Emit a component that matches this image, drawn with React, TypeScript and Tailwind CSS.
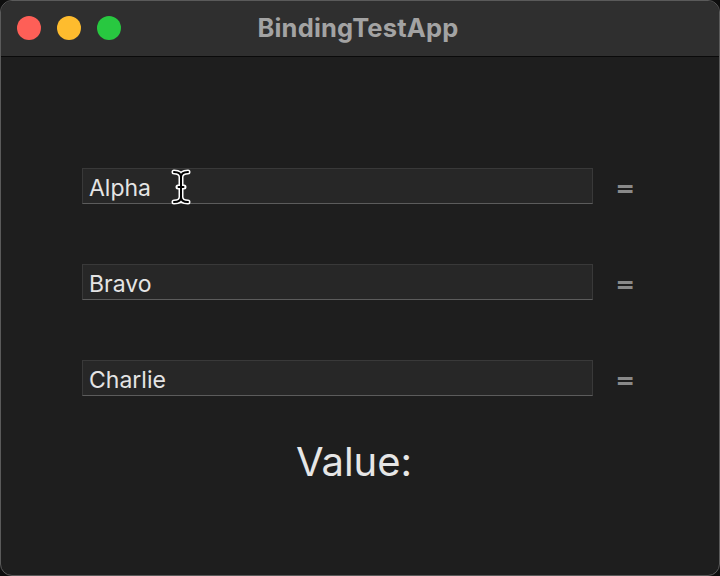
const fields = ['Alpha', 'Bravo', 'Charlie'];

const App = () => {
  return (
    <div className="w-[720px] h-[576px] bg-[#0e0e0e] font-['Inter',sans-serif]">
      <div className="relative flex flex-col w-full h-full rounded-[12px] overflow-hidden border border-[#5a5a5a] bg-[#1e1e1e]">
        {/* Title bar */}
        <div className="relative flex items-center justify-center h-[56px] shrink-0 bg-[#2f2f2f] border-b border-[#0a0a0a]">
          <div className="absolute left-[16px] top-[15px] flex gap-[16px]">
            <span className="w-[24px] h-[24px] rounded-full bg-[#fe5f57]" />
            <span className="w-[24px] h-[24px] rounded-full bg-[#febc2e]" />
            <span className="w-[24px] h-[24px] rounded-full bg-[#28c840]" />
          </div>
          <h1 className="text-[25.5px] font-bold text-[#a3a3a3] tracking-[0.2px] -ml-[4px]">BindingTestApp</h1>
        </div>

        {/* Content */}
        <main className="flex flex-col pt-[111px]">
          <div className="flex flex-col gap-[60px]">
            {fields.map((f) => (
              <div key={f} className="flex items-center h-[36px] pl-[81px]">
                <div className="relative w-[511px] h-[36px] flex items-center pl-[6px] pt-[3px] bg-[#272727] border border-[#393939] border-b-[#5c5c5c]">
                  <span className="text-[23px] leading-[28px] text-[#e4e4e4]">{f}</span>
                  {f === 'Alpha' && (
                    <svg className="absolute left-[88px] top-[0px]" width="20" height="36" viewBox="0 0 20 36">
                      <path d="M3 3 Q10 3 10 8 Q10 3 17 3 M10 8 V28 M3 33 Q10 33 10 28 Q10 33 17 33 M7 18 H13" fill="none" stroke="#fff" strokeWidth="5" strokeLinecap="round" />
                      <path d="M3 3 Q10 3 10 8 Q10 3 17 3 M10 8 V28 M3 33 Q10 33 10 28 Q10 33 17 33 M7.5 18 H12.5" fill="none" stroke="#000" strokeWidth="2" strokeLinecap="round" />
                    </svg>
                  )}
                </div>
                <span className="ml-[24px] text-[24px] leading-[28px] font-bold text-[#8a8a8a] translate-y-[2px] scale-x-[1.25]">=</span>
              </div>
            ))}
          </div>
          <div className="flex justify-center pr-[12px] mt-[36px]">
            <p className="text-[40px] leading-[60px] text-[#e6e6e6]">Value:</p>
          </div>
        </main>
      </div>
    </div>
  );
};

export default App;
